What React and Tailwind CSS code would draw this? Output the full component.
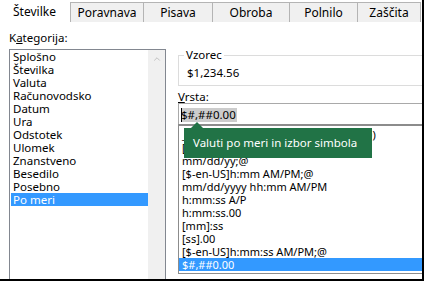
import { ChevronUp } from 'lucide-react';

const tabs = [
  { label: 'Poravnava', w: 'w-[73px]' },
  { label: 'Pisava', w: 'w-[69px]' },
  { label: 'Obroba', w: 'w-[77px]' },
  { label: 'Polnilo', w: 'w-[68px]' },
  { label: 'Zaščita', w: 'w-[64px] border-r' },
];

const categories = [
  'Splošno',
  'Številka',
  'Valuta',
  'Računovodsko',
  'Datum',
  'Ura',
  'Odstotek',
  'Ulomek',
  'Znanstveno',
  'Besedilo',
  'Posebno',
  'Po meri',
];

const formats = [
  '_([$$-409]#,##0.00_);[Red]($#,##0.00)',
  '[$-x-systime]h:mm:ss',
  'mm/dd/yy;@',
  '[$-en-US]h:mm AM/PM;@',
  'mm/dd/yyyy hh:mm AM/PM',
  'h:mm:ss A/P',
  'h:mm:ss.00',
  '[mm]:ss',
  '[ss].00',
  '[$-en-US]h:mm:ss AM/PM;@',
  '$#,##0.00',
];

export default function App() {
  return (
    <div className="relative w-[424px] h-[281px] overflow-hidden bg-white border-r-2 border-b-2 border-black flex flex-col font-['Noto_Sans',sans-serif] text-[11.5px] text-black">
      {/* tab strip */}
      <div className="flex items-end h-[22px] shrink-0 text-[12px]">
        <div className="w-[70px] h-[22px] bg-white pl-[13px] leading-[24px]">Številke</div>
        {tabs.map((t) => (
          <div
            key={t.label}
            className={`${t.w} h-[20px] shrink-0 bg-[#f0f0f0] border-t border-l border-[#b4b4b4] flex items-center justify-center leading-none`}
          >
            {t.label}
          </div>
        ))}
      </div>

      <div className="flex flex-1 min-h-0">
        {/* categories */}
        <div className="ml-[9px] w-[157px] shrink-0 flex flex-col">
          <div className="mt-[9px] h-[14px] leading-[14px]">
            K<span className="underline">a</span>tegorija:
          </div>
          <div className="mt-[4px] flex flex-1 border border-[#828790] border-b-0">
            <div className="flex-1 pl-[1px]">
              {categories.map((c) => (
                <div
                  key={c}
                  className={`h-[13px] leading-[13px] pl-[2px] ${c === 'Po meri' ? 'bg-[#3399ff] text-white' : ''}`}
                >
                  {c}
                </div>
              ))}
            </div>
            <div className="w-[17px] bg-[#f0f0f0] flex justify-center pt-[4px]">
              <ChevronUp className="w-[10px] h-[10px] text-[#b8b8b8]" strokeWidth={2} />
            </div>
          </div>
        </div>

        {/* right side */}
        <div className="ml-[12px] w-[262px] shrink-0 flex flex-col">
          <fieldset className="mt-[26px] h-[38px] border border-[#dcdcdc]">
            <legend className="ml-[5px] px-[2px] leading-[14px]">Vzorec</legend>
            <div className="pl-[8px] mt-[4px] leading-[14px]">$1,234.56</div>
          </fieldset>

          <div className="mt-[4px] h-[13px] leading-[13px]">
            <span className="underline">V</span>rsta:
          </div>

          <div className="h-[21px] border-t border-l border-r border-[#a9a9a9] flex items-start pl-[2px] pt-[4px]">
            <div className="relative bg-[#cccccc] h-[14px] leading-[14px] pr-[1px]">
              <span className="absolute left-0 top-0 w-px h-[14px] bg-black" />
              $#,##0.00
            </div>
          </div>

          <div className="h-[150px] border-t-2 border-l border-b border-[#8c8c8c] pt-[2px] text-[11px]">
            {formats.map((f, i) => (
              <div
                key={i}
                className={`h-[13px] leading-[13px] pl-[3px] whitespace-nowrap ${i === formats.length - 1 ? 'bg-[#3399ff] text-white' : ''}`}
              >
                {f}
              </div>
            ))}
          </div>
        </div>
      </div>

      {/* tooltip */}
      <div className="absolute left-[184px] top-[122px] flex flex-col">
        <div className="ml-[7px] w-0 h-0 border-l-[6px] border-r-[6px] border-b-[6px] border-l-transparent border-r-transparent border-b-[#217346]" />
        <div className="w-[188px] h-[30px] bg-[#217346] text-white text-[11.5px] leading-[30px] pl-[9px] whitespace-nowrap">
          Valuti po meri in izbor simbola
        </div>
      </div>
    </div>
  );
}
